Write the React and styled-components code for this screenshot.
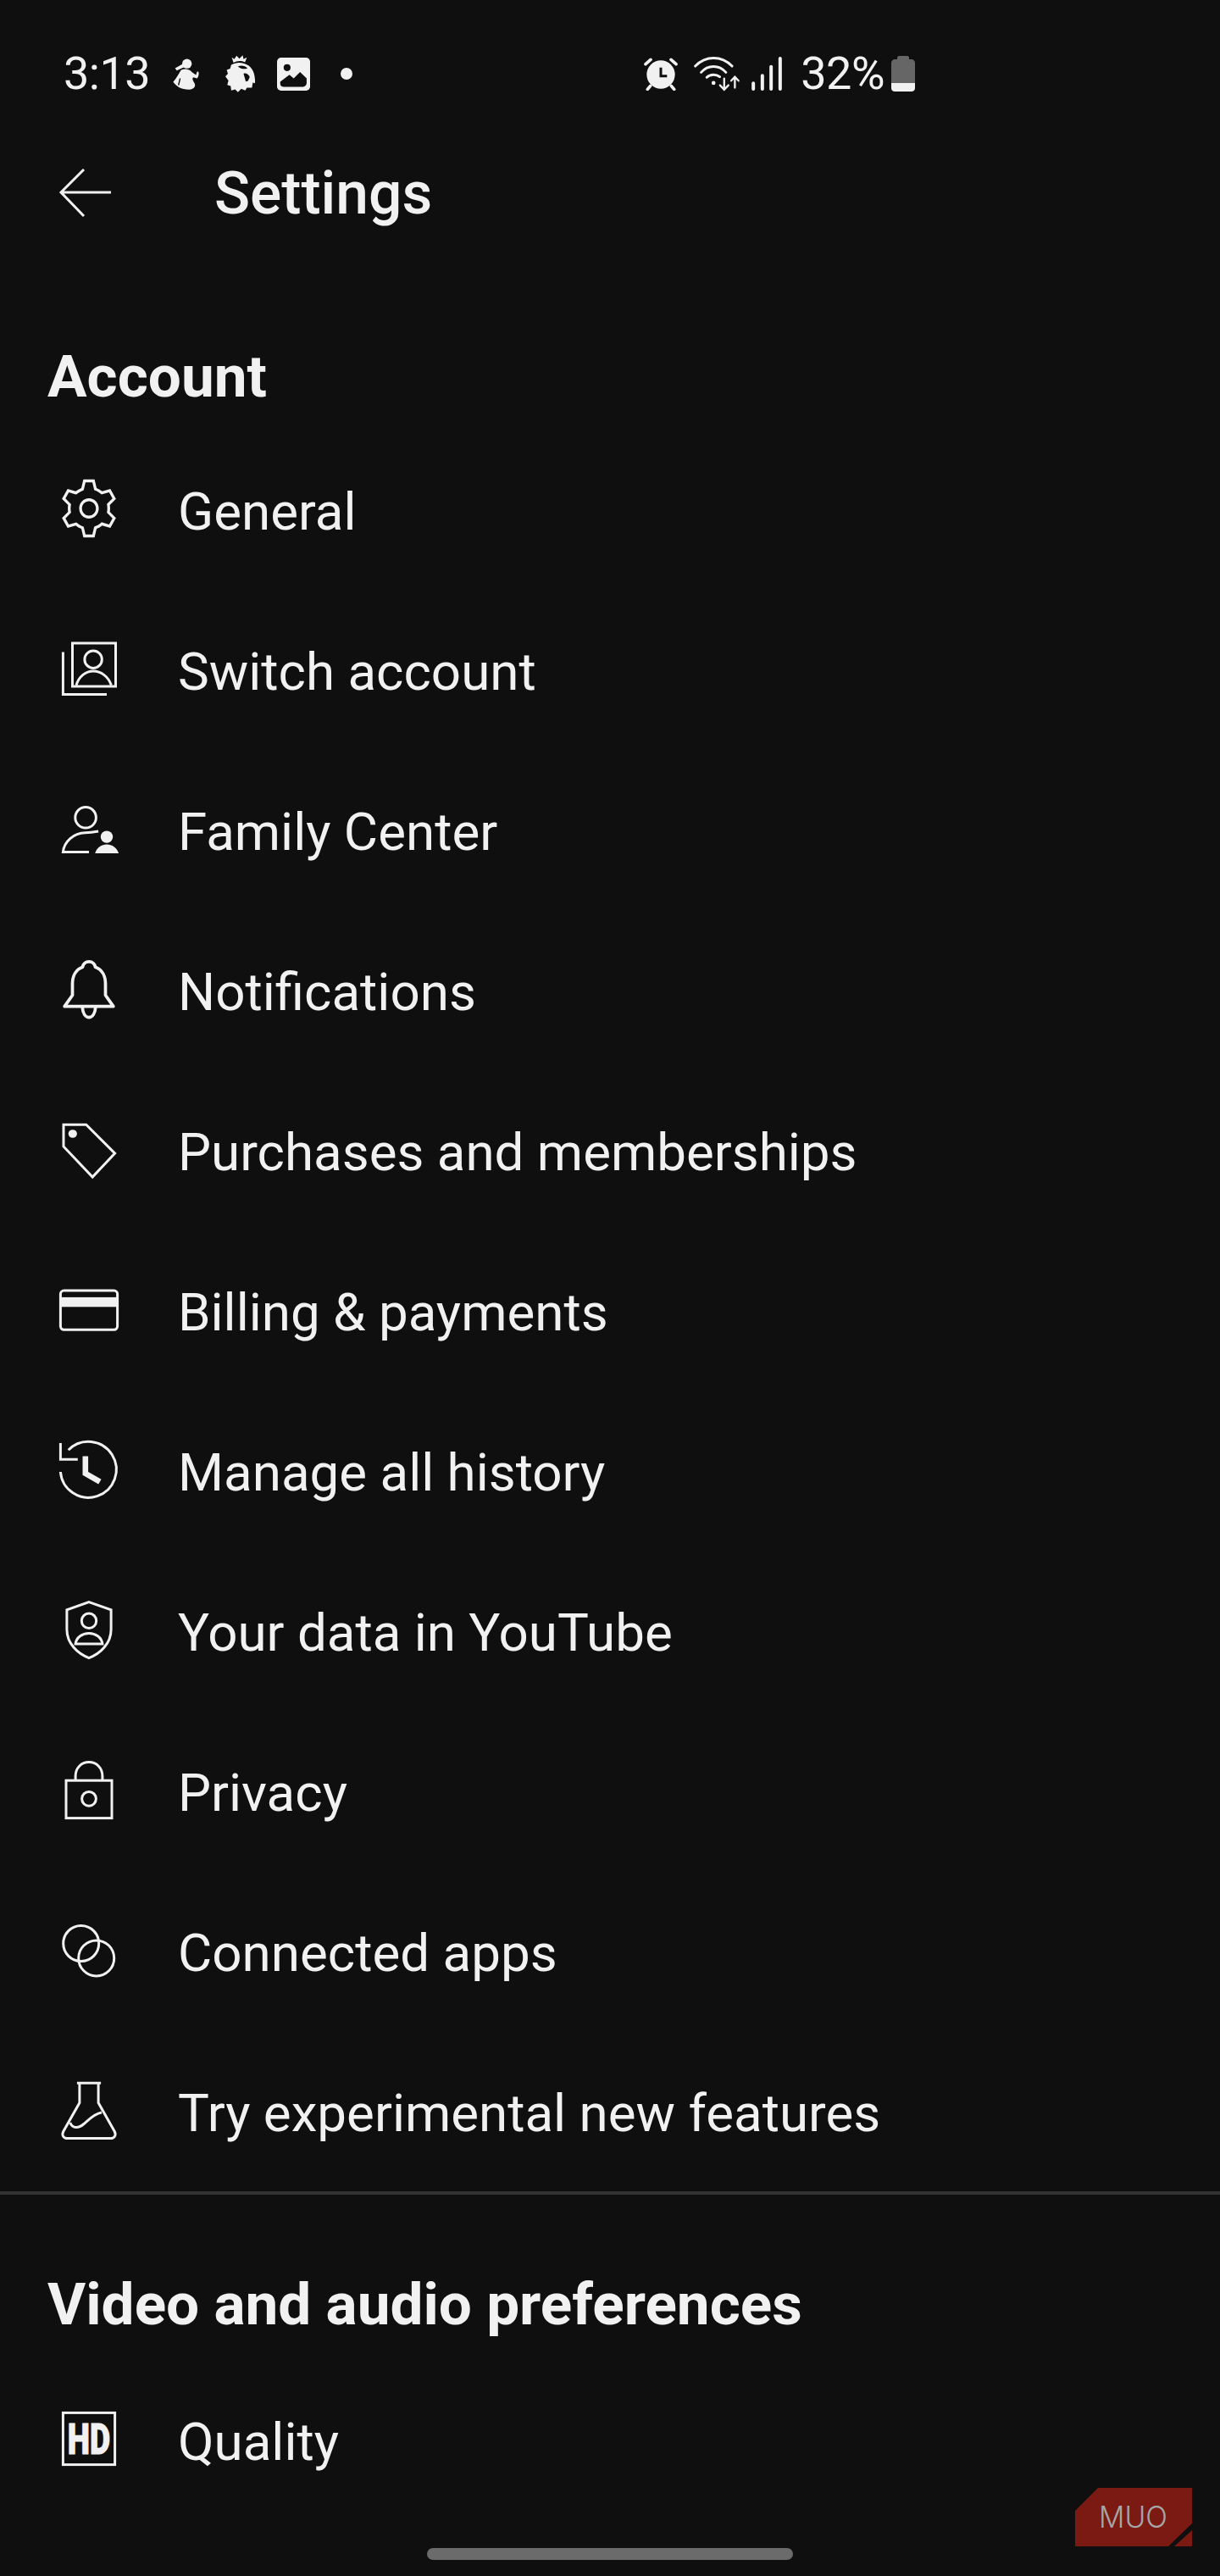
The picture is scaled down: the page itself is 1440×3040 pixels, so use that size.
import React from "react";
import styled, { createGlobalStyle } from "styled-components";

const Global = createGlobalStyle`
  html, body { margin: 0; padding: 0; background: #0f0f0f; }
  * { box-sizing: border-box; }
`;

const Page = styled.div`
  position: relative;
  width: 1440px;
  height: 3040px;
  overflow: hidden;
  background: #0f0f0f;
  color: #f1f1f1;
  font-family: Roboto, "Liberation Sans", sans-serif;
`;

const StatusBar = styled.div`
  height: 174px;
  padding: 0 360px 0 75px;
  display: flex;
  align-items: center;
  justify-content: space-between;
`;
const StatusGroup = styled.div`
  display: flex;
  align-items: center;
`;
const StatusText = styled.span`
  margin-left: ${(p) => p.$gap || 0}px;
  font-size: 54px;
  line-height: 56px;
  font-weight: 400;
  letter-spacing: -0.5px;
`;
const StatusIcon = styled.svg`
  display: block;
  flex: none;
  margin-left: ${(p) => p.$gap}px;
`;

const Header = styled.header`
  height: 108px;
  padding-left: 69px;
  display: flex;
  align-items: center;
`;
const BackIcon = styled.svg`
  display: block;
  width: 62px;
  height: 58px;
  margin-right: 122px;
`;
const Title = styled.h1`
  margin: 2px 0 0;
  font-size: 69.5px;
  line-height: 80px;
  font-weight: 500;
`;

const Section = styled.section`
  padding-top: ${(p) => p.$top}px;
`;
const SectionTitle = styled.h2`
  margin: 0 0 ${(p) => p.$after}px;
  padding-left: 56px;
  font-size: 69.3px;
  line-height: 80px;
  font-weight: 700;
`;
const Row = styled.div`
  height: 189px;
  padding-left: 69px;
  display: flex;
  align-items: center;
`;
const IconSlot = styled.svg`
  display: block;
  flex: none;
  width: 72px;
  height: 72px;
  margin-top: -3px;
  overflow: visible;
  fill: none;
  stroke: #f1f1f1;
  stroke-width: 1;
`;
const Label = styled.span`
  margin: 4px 0 0 69px;
  font-size: 61.9px;
  line-height: 72px;
  font-weight: 400;
`;
const Divider = styled.hr`
  margin: 0;
  border: 0;
  height: 4px;
  background: #333;
`;
const HomeBar = styled.div`
  position: absolute;
  left: 504px;
  top: 3007px;
  width: 432px;
  height: 14px;
  border-radius: 7px;
  background: #6b6b6b;
`;
const Watermark = styled.svg`
  position: absolute;
  left: 1269px;
  top: 2936px;
  width: 138px;
  height: 69px;
`;

const W = "#f1f1f1";
const D = "#0f0f0f";

const icons = {
  gear: (
    <path
      stroke="none"
      fill={W}
      transform="translate(12 12) scale(1.1 1.14) translate(-12 -12)"
      d="M12 9.5c1.38 0 2.5 1.12 2.5 2.5s-1.12 2.5-2.5 2.5-2.5-1.12-2.5-2.5 1.12-2.5 2.5-2.5m0-1c-1.93 0-3.5 1.57-3.5 3.5s1.57 3.5 3.5 3.5 3.5-1.57 3.5-3.5-1.57-3.5-3.5-3.5zM13.22 3l.55 2.2.13.51.5.18c.61.23 1.19.56 1.72.98l.4.32.5-.14 2.17-.62 1.22 2.11-1.63 1.59-.37.36.08.51c.05.32.08.64.08.98s-.03.66-.08.98l-.08.51.37.36 1.63 1.59-1.22 2.11-2.17-.62-.5-.14-.4.32c-.53.43-1.11.76-1.72.98l-.5.18-.13.51-.55 2.24h-2.44l-.55-2.2-.13-.51-.5-.18c-.6-.23-1.18-.56-1.72-.99l-.4-.32-.5.14-2.17.62-1.21-2.12 1.63-1.59.37-.36-.08-.51c-.05-.32-.08-.65-.08-.98s.03-.66.08-.98l.08-.51-.37-.36L3.6 8.56l1.22-2.11 2.17.62.5.14.4-.32c.53-.44 1.11-.77 1.72-.99l.5-.18.13-.51.54-2.21h2.44M14 2h-4l-.74 2.96c-.73.27-1.4.66-2 1.14l-2.92-.83-2 3.46 2.19 2.13c-.06.37-.09.75-.09 1.14s.03.77.09 1.14l-2.19 2.13 2 3.46 2.92-.83c.6.48 1.27.87 2 1.14L10 22h4l.74-2.96c.73-.27 1.4-.66 2-1.14l2.92.83 2-3.46-2.19-2.13c.06-.37.09-.75.09-1.14s-.03-.77-.09-1.14l2.19-2.13-2-3.46-2.92.83c-.6-.48-1.27-.87-2-1.14L14 2z"
    />
  ),
  switch: (
    <>
      <rect x="5.5" y="2" width="17" height="17" />
      <path d="M1.8 5.5V22.2H19" />
      <circle cx="13.7" cy="8.4" r="3.4" />
      <path d="M7 18.6C8 15 10.8 13 13.7 13S19.6 15 20.8 18.6" />
    </>
  ),
  family: (
    <>
      <circle cx="10.7" cy="7.6" r="4.1" />
      <path d="M12 21.2H1.8C2.2 17 6 13.7 10.5 13.6C12 13.6 13.7 13.4 15.7 13" />
      <circle cx="19" cy="15.2" r="2.4" fill={W} stroke="none" />
      <path d="M14.4 21.7C15 19.5 17 18.2 19 18.2S23 19.5 23.7 21.7Z" fill={W} stroke="none" />
    </>
  ),
  bell: (
    <>
      <path d="M12 1.3C13.3 1.3 14.3 2.2 14.5 3.4C17.2 4.4 18.5 7 18.5 10V14.5L21.6 18.9H2.4L5.5 14.5V10C5.5 7 6.8 4.4 9.5 3.4C9.7 2.2 10.7 1.3 12 1.3Z" strokeLinejoin="round" strokeWidth="1.25" />
      <path d="M9.4 19.2C9.6 21.6 10.6 23.2 12 23.2S14.4 21.6 14.6 19.2" strokeWidth="1.25" />
    </>
  ),
  tag: (
    <>
      <path d="M2 2.4H10.9L22.2 13.7L13.4 23L2 11V2.4Z" />
      <ellipse cx="5.6" cy="6" rx="1.7" ry="1.6" fill={W} stroke="none" />
    </>
  ),
  card: (
    <>
      <rect x="0.8" y="4.7" width="22.4" height="15.4" rx="1.4" />
      <rect x="0.8" y="7.3" width="22.4" height="3.8" fill={W} stroke="none" />
    </>
  ),
  history: (
    <>
      <path d="M0.8 13A11 11 0 1 0 3.9 4.4" />
      <path d="M0.8 1.7V8.1H7.6" />
      <path d="M10.6 6.8V13.6L16.3 16.9" strokeWidth="2.2" />
    </>
  ),
  shield: (
    <>
      <path d="M12 1.2L20.7 4.3V12C20.7 17.5 16.5 21.5 12 23.2C7.5 21.5 3.3 17.5 3.3 12V4.3Z" />
      <circle cx="12" cy="8.6" r="2.9" />
      <path d="M6.7 17.7H17.3C17 15 14.5 13.5 12 13.5S7 15 6.7 17.7Z" />
    </>
  ),
  lock: (
    <>
      <rect x="3" y="8.4" width="18" height="14.8" />
      <path d="M6.7 8.4V6.7C6.7 3.5 9 1.2 12 1.2S17.3 3.5 17.3 6.7V8.4" />
      <circle cx="12" cy="15.6" r="2.8" />
    </>
  ),
  apps: (
    <>
      <circle cx="8.9" cy="9.5" r="7" />
      <circle cx="14.9" cy="15.3" r="7" />
    </>
  ),
  flask: (
    <>
      <path d="M7.3 1.4H16.7M8.3 1.4V9.2L1.9 20.5C1.2 22 2 23.2 3.5 23.2H20.5C22 23.2 22.8 22 22.1 20.5L15.7 9.2V1.4" />
      <path d="M4.6 17C5.5 19.5 8 19.2 10 17.5C12 15.8 14 13.5 17 13" />
    </>
  ),
  hd: (
    <>
      <rect x="1.8" y="1.8" width="20.4" height="20.4" />
      <text
        x="3.6"
        y="17.9"
        textLength="16.8"
        lengthAdjust="spacingAndGlyphs"
        fontFamily="Roboto, sans-serif"
        fontWeight="900"
        fontSize="16.4"
        fill={W}
        stroke={W}
        strokeWidth="0.35"
      >
        HD
      </text>
    </>
  ),
};

const account = [
  ["gear", "General"],
  ["switch", "Switch account"],
  ["family", "Family Center"],
  ["bell", "Notifications"],
  ["tag", "Purchases and memberships"],
  ["card", "Billing & payments"],
  ["history", "Manage all history"],
  ["shield", "Your data in YouTube"],
  ["lock", "Privacy"],
  ["apps", "Connected apps"],
  ["flask", "Try experimental new features"],
];

function SettingRow({ icon, label }) {
  return (
    <Row>
      <IconSlot viewBox="0 0 24 24">{icons[icon]}</IconSlot>
      <Label>{label}</Label>
    </Row>
  );
}

const Runner = () => (
  <StatusIcon $gap={27} width="31" height="37" viewBox="42 42 93 110" fill={W}>
    <circle cx="92" cy="60" r="17" />
    <path d="M78 60L50 76L56 84L82 72Z" />
    <path d="M72 82C65 90 60 105 43 125C55 140 70 152 100 152C118 150 125 140 118 128C112 118 110 112 114 108L128 112C135 105 135 90 132 88L128 88L124 100L110 90C100 78 85 76 72 82Z" />
    <path d="M68 112L62 136" stroke={D} strokeWidth="4" fill="none" />
  </StatusIcon>
);

const Lion = () => (
  <StatusIcon $gap={31} width="35" height="44" viewBox="227 30 106 132" fill={W}>
    <path d="M250 38L259 44L267 32L277 42L289 30L292 44L304 38L297 55C282 48 268 50 256 57Z" />
    <path d="M248 64C262 56 280 54 294 60C320 66 335 92 333 130L325 128L322 146L304 146L298 156L284 150L272 162L262 152L248 156L246 140L234 136L238 120L227 106L236 96L232 82L244 78Z" />
    <path d="M272 70C284 64 298 68 306 76C296 82 282 78 272 70Z" fill={D} />
    <path d="M292 96C300 92 310 98 314 108L308 122L300 124L296 110Z" fill={D} />
  </StatusIcon>
);

const ImageGlyph = () => (
  <StatusIcon $gap={26} width="39" height="39" viewBox="412 40 115 115">
    <rect x="412" y="40" width="115" height="115" rx="14" fill={W} />
    <circle cx="447" cy="75" r="12" fill={D} />
    <path d="M423 130V124L455 100L470 112L492 90L515 112V128C515 137 508 142 500 142H436C428 142 423 137 423 130Z" fill={D} />
  </StatusIcon>
);

const Dot = () => (
  <StatusIcon $gap={36} width="14" height="14" viewBox="0 0 14 14">
    <circle cx="7" cy="7" r="7" fill={W} />
  </StatusIcon>
);

const Alarm = () => (
  <StatusIcon $gap={0} width="40" height="39" viewBox="35 35 120 117" fill="none" stroke={W} strokeLinecap="round">
    <circle cx="95" cy="95" r="50" fill={W} stroke="none" />
    <path d="M41 58L59 42M131 42L149 58M58 135L48 147M132 135L142 147" strokeWidth="11" />
    <path d="M95 70V100H117" stroke={D} strokeWidth="9" strokeLinecap="butt" />
  </StatusIcon>
);

const Wifi = () => (
  <StatusIcon $gap={19} width="55" height="41" viewBox="212 35 166 123" fill="none" stroke={W} strokeLinecap="round">
    <path d="M217 68C255 30 310 30 348 68M238 90C262 62 302 62 326 90M258 108C270 96 292 96 304 106" strokeWidth="9" />
    <circle cx="282" cy="128" r="7" fill={W} stroke="none" />
    <path d="M320 112V150M305 136L320 152L335 136M358 145V106M345 120L358 106L371 120" strokeWidth="7" />
  </StatusIcon>
);

const Signal = () => (
  <StatusIcon $gap={13} width="36" height="40" viewBox="418 35 107 120" fill="none" stroke={W} strokeLinecap="round" strokeWidth="12">
    <path d="M424 129V149M456 102V149M487 70V149M519 41V149" />
  </StatusIcon>
);

const Battery = () => (
  <StatusIcon $gap={8} width="28" height="42" viewBox="0 0 28 42">
    <path d="M9 0H19C20 0 21 1 21 2V4H24C26 4 28 6 28 8V32H0V8C0 6 2 4 4 4H7V2C7 1 8 0 9 0Z" fill="#666" />
    <path d="M0 32H28V38C28 40.5 26 42 24 42H4C2 42 0 40.5 0 38Z" fill={W} />
  </StatusIcon>
);

export default function App() {
  return (
    <Page>
      <Global />
      <StatusBar>
        <StatusGroup>
          <StatusText>3:13</StatusText>
          <Runner />
          <Lion />
          <ImageGlyph />
          <Dot />
        </StatusGroup>
        <StatusGroup>
          <Alarm />
          <Wifi />
          <Signal />
          <StatusText $gap={22}>32%</StatusText>
          <Battery />
        </StatusGroup>
      </StatusBar>
      <Header>
        <BackIcon viewBox="0 0 62 58" fill="none" stroke={W} strokeWidth="3">
          <path d="M62 28H3M30 1L3 28L30 56" />
        </BackIcon>
        <Title>Settings</Title>
      </Header>
      <Section $top={123}>
        <SectionTitle $after={22}>Account</SectionTitle>
        {account.map(([icon, label]) => (
          <SettingRow key={label} icon={icon} label={label} />
        ))}
      </Section>
      <Divider />
      <Section $top={90}>
        <SectionTitle $after={25}>Video and audio preferences</SectionTitle>
        <SettingRow icon="hd" label="Quality" />
      </Section>
      <Watermark viewBox="0 0 138 69">
        <path d="M27 0H138V42L110 69H0V27Z" fill="#7b1a12" />
        <path d="M138 50V69H117Z" fill="#7b1a12" />
        <text x="28" y="46.5" fontFamily="Inter, sans-serif" fontWeight="300" fontSize="35" textLength="81" lengthAdjust="spacingAndGlyphs" fill="#a6a6a6">
          MUO
        </text>
      </Watermark>
      <HomeBar />
    </Page>
  );
}
